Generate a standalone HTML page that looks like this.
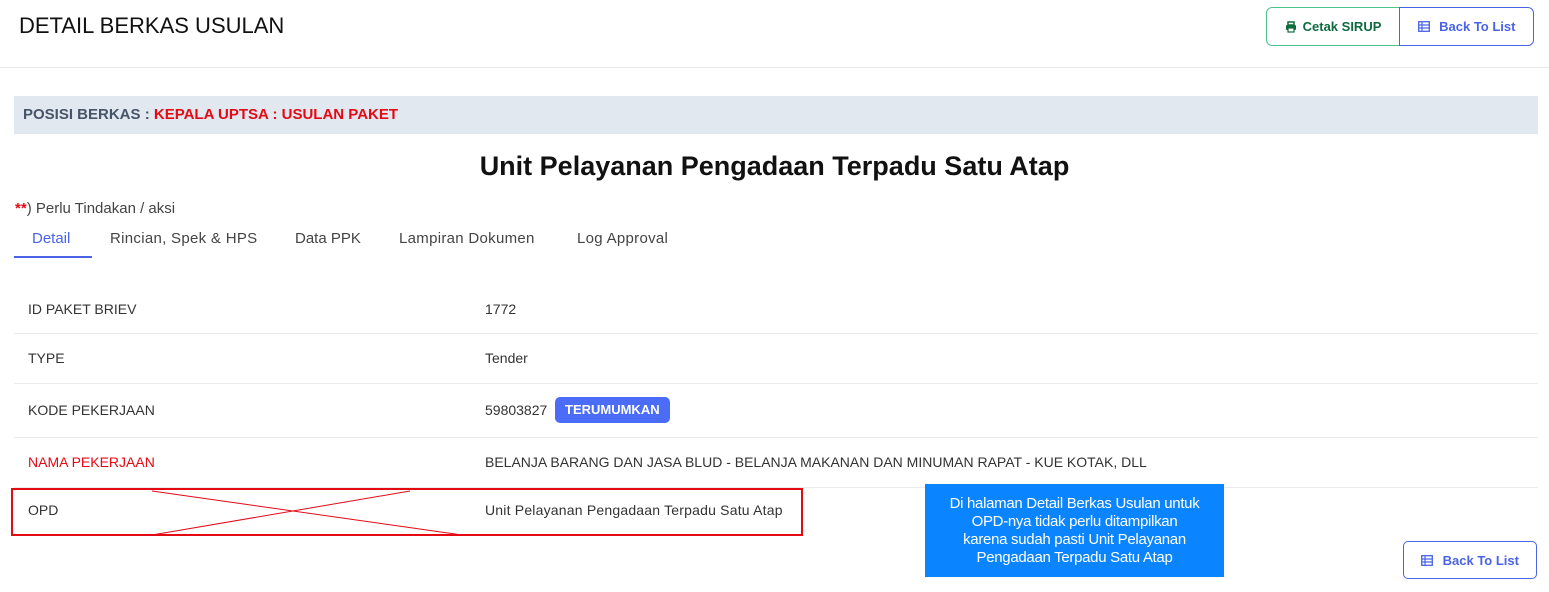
<!DOCTYPE html>
<html><head><meta charset="utf-8"><style>
*{box-sizing:border-box;margin:0;padding:0}
body{width:1549px;height:592px;background:#fff;font-family:"Liberation Sans",sans-serif;position:relative;overflow:hidden;color:#333}
.a{position:absolute;white-space:nowrap}
.btn{position:absolute;border:1px solid;font-weight:bold;font-size:13px;display:flex;align-items:center;justify-content:center;gap:6px}
.row{position:absolute;left:14px;width:1524px;border-bottom:1px solid #e9ecef;height:1px}
.lbl{left:28px;font-size:14px;color:#333}
.val{left:485px;font-size:14px;color:#333}
</style></head><body>
<div class="a" style="left:19px;top:13px;font-size:22px;color:#111">DETAIL BERKAS USULAN</div>
<div class="btn" style="left:1266px;top:7px;width:134px;height:39px;border-color:#4cc38a;color:#0d6b3f;border-radius:6px 0 0 6px">
<svg width="12" height="12" viewBox="0 0 12 12"><rect x="3" y="1" width="6" height="3" fill="none" stroke="#0d6b3f" stroke-width="1.5"/><rect x="1" y="4" width="10" height="5" rx="1" fill="#0d6b3f"/><rect x="3" y="7" width="6" height="4" fill="#fff" stroke="#0d6b3f" stroke-width="1.2"/></svg>Cetak SIRUP</div>
<div class="btn" style="left:1399px;top:7px;width:135px;height:39px;border-color:#4a63e7;color:#4a63e7;border-radius:0 6px 6px 0">
<svg width="12" height="11" viewBox="0 0 12 11"><rect x="0.7" y="0.7" width="10.6" height="9.6" fill="none" stroke="#4a63e7" stroke-width="1.3"/><path d="M1 4H11M1 7H11M4 1V10" stroke="#4a63e7" stroke-width="1.2"/></svg>&nbsp;Back To List</div>
<div class="a" style="left:0;top:67px;width:1549px;border-top:1px solid #e5e7eb"></div>
<div class="a" style="left:14px;top:96px;width:1524px;height:38px;background:#e2e8f0;padding:10px 9px;font-size:15px;font-weight:bold;color:#475569">POSISI BERKAS : <span style="color:#e50914">KEPALA UPTSA : USULAN PAKET</span></div>
<div class="a" style="left:0;width:1549px;text-align:center;top:151px;font-size:27px;font-weight:bold;color:#111">Unit Pelayanan Pengadaan Terpadu Satu Atap</div>
<div class="a" style="left:15px;top:200px;font-size:15px;color:#444"><b style="color:#e50914">**</b>) Perlu Tindakan / aksi</div>
<div class="a" style="left:32px;top:230px;font-size:15px;color:#4a63e7">Detail</div>
<div class="a" style="left:14px;top:256px;width:78px;border-top:2px solid #4a63e7"></div>
<div class="a" style="left:110px;top:230px;font-size:15px;color:#444;letter-spacing:0.3px">Rincian, Spek &amp; HPS</div>
<div class="a" style="left:295px;top:230px;font-size:15px;color:#444">Data PPK</div>
<div class="a" style="left:399px;top:230px;font-size:15px;color:#444;letter-spacing:0.3px">Lampiran Dokumen</div>
<div class="a" style="left:577px;top:230px;font-size:15px;color:#444;letter-spacing:0.3px">Log Approval</div>
<div class="a lbl" style="top:301px">ID PAKET BRIEV</div><div class="a val" style="top:301px">1772</div>
<div class="row" style="top:333px"></div>
<div class="a lbl" style="top:350px">TYPE</div><div class="a val" style="top:350px">Tender</div>
<div class="row" style="top:383px"></div>
<div class="a lbl" style="top:402px">KODE PEKERJAAN</div><div class="a val" style="top:402px">59803827</div>
<div class="a" style="left:555px;top:397px;height:26px;padding:5px 10px;background:#4a6cf7;color:#fff;font-weight:bold;font-size:13px;border-radius:5px">TERUMUMKAN</div>
<div class="row" style="top:437px"></div>
<div class="a lbl" style="top:454px;color:#e50914">NAMA PEKERJAAN</div><div class="a val" style="top:454px">BELANJA BARANG DAN JASA BLUD - BELANJA MAKANAN DAN MINUMAN RAPAT - KUE KOTAK, DLL</div>
<div class="row" style="top:487px"></div>
<div class="a lbl" style="top:502px">OPD</div><div class="a val" style="top:502px;letter-spacing:0.2px">Unit Pelayanan Pengadaan Terpadu Satu Atap</div>
<div class="a" style="left:11px;top:488px;width:792px;height:48px;border:2px solid #e50914"></div>
<svg class="a" style="left:0;top:0" width="1549" height="592"><path d="M152 491L462 535M410 491L152 535" stroke="#e50914" stroke-width="1"/></svg>
<div class="a" style="left:925px;top:484px;width:299px;height:93px;background:#0a84ff;color:#fff;font-size:15px;text-align:center;line-height:18px;padding-top:11px;letter-spacing:-0.3px">Di halaman Detail Berkas Usulan untuk<br>OPD-nya tidak perlu ditampilkan<br>karena sudah pasti Unit Pelayanan<br>Pengadaan Terpadu Satu Atap</div>
<div class="btn" style="left:1403px;top:541px;width:134px;height:38px;border-color:#4a63e7;color:#4a63e7;border-radius:5px">
<svg width="12" height="11" viewBox="0 0 12 11"><rect x="0.7" y="0.7" width="10.6" height="9.6" fill="none" stroke="#4a63e7" stroke-width="1.3"/><path d="M1 4H11M1 7H11M4 1V10" stroke="#4a63e7" stroke-width="1.2"/></svg>&nbsp;Back To List</div>
</body></html>
